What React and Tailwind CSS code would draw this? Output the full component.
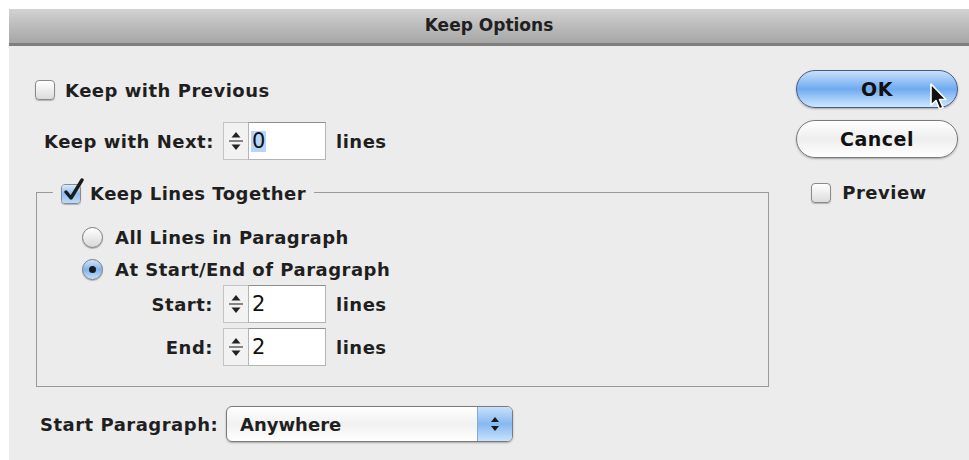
import React from 'react';

const font = { fontFamily: '"DejaVu Sans", "Liberation Sans", sans-serif' };

function Checkbox({ checked = false }) {
  return (
    <span className="relative inline-block h-[20px] w-[20px] shrink-0 rounded-[4px] border border-[#8a8a8a] bg-gradient-to-b from-[#ffffff] to-[#dcdcdc] shadow-[0_1px_1px_rgba(0,0,0,0.25)]">
      {checked && (
        <>
          <span className="absolute inset-0 rounded-[3px] bg-gradient-to-b from-[#d6e9fb] via-[#8fbef0] to-[#b9dcfb]" />
          <svg className="absolute -top-[7px] left-[1px]" width="22" height="25" viewBox="0 0 22 25">
            <path d="M3 14 L8 20 L19 2" fill="none" stroke="#1b1b1b" strokeWidth="3.4" strokeLinecap="round" strokeLinejoin="round" />
          </svg>
        </>
      )}
    </span>
  );
}

function Radio({ checked = false }) {
  return (
    <span
      className={`relative inline-flex h-[21px] w-[21px] shrink-0 items-center justify-center rounded-full border border-[#7d7d7d] shadow-[0_1px_1px_rgba(0,0,0,0.25)] ${
        checked ? 'bg-gradient-to-b from-[#cfe5fb] via-[#7fb4ec] to-[#c4e0fb]' : 'bg-gradient-to-b from-[#ffffff] to-[#d8d8d8]'
      }`}
    >
      {checked && <span className="h-[7px] w-[7px] rounded-full bg-[#1a1a1a]" />}
    </span>
  );
}

// number field with the little up/down arrows on its left
function Stepper({ value, selected = false }) {
  return (
    <div className="flex h-[38px]">
      <div className="flex w-[25px] flex-col items-center justify-center border border-r-0 border-[#c4c4c4] bg-[#f2f2f2]">
        <svg width="16" height="26" viewBox="0 0 16 26">
          <path d="M8 4 L12.5 9.5 L3.5 9.5 Z" fill="#222" />
          <line x1="1" y1="13" x2="15" y2="13" stroke="#555" strokeWidth="1.4" />
          <path d="M8 22 L12.5 16.5 L3.5 16.5 Z" fill="#222" />
        </svg>
      </div>
      <div className="flex w-[78px] items-center border border-[#b4b4b4] border-t-[#8e8e8e] bg-white pl-[2px] text-[21px] font-normal leading-none tracking-normal text-[#111]">
        <span className={selected ? 'bg-[#b5d5fb] px-[1px]' : 'px-[1px]'}>{value}</span>
      </div>
    </div>
  );
}

function Pill({ children, primary = false }) {
  return (
    <div
      className={`flex h-[38px] w-[162px] items-center justify-center rounded-full border text-[19px] text-[#111] shadow-[0_1px_2px_rgba(0,0,0,0.3)] ${
        primary
          ? 'border-[#4b5a86] bg-gradient-to-b from-[#c9e1fa] via-[#6faaf0] to-[#cfe8fd]'
          : 'border-[#7a7a7a] bg-gradient-to-b from-[#ffffff] via-[#eeeeee] to-[#ffffff]'
      }`}
    >
      {children}
    </div>
  );
}

export default function App() {
  return (
    <div
      className="h-[460px] w-[969px] overflow-hidden bg-white pl-[9px] pt-[9px] text-[18px] font-bold tracking-[0.5px] text-[#1f1f1f]"
      style={font}
    >
      <div className="flex h-full flex-col bg-[#ececec]">
        {/* title bar */}
        <div className="flex h-[34px] items-center justify-center bg-gradient-to-b from-[#d2d2d2] to-[#a6a6a6] text-[17px] tracking-normal text-[#202020]">
          Keep Options
        </div>
        <div className="h-[3px] bg-[#7f7f7f]" />

        <div className="relative flex flex-1">
          {/* left column */}
          <div className="flex flex-col pl-[26px] pt-[34px]">
            <label className="flex h-[20px] items-center gap-[10px]">
              <Checkbox />
              Keep with Previous
            </label>

            <div className="mt-[22px] flex items-center pl-[9px]">
              <span className="w-[179px]">Keep with Next:</span>
              <Stepper value="0" selected />
              <span className="ml-[10px]">lines</span>
            </div>

            {/* Keep Lines Together group */}
            <div className="relative ml-[1px] mt-[32px] h-[195px] w-[733px] border border-[#9a9a9a] pt-[31px]">
              <label className="absolute -top-[13px] left-[16px] flex items-center gap-[9px] bg-[#ececec] px-[8px]">
                <Checkbox checked />
                Keep Lines Together
              </label>

              <div className="flex flex-col gap-[5px] pl-[45px]">
                <label className="flex items-center gap-[12px]">
                  <Radio />
                  All Lines in Paragraph
                </label>
                <label className="flex items-center gap-[12px]">
                  <Radio checked />
                  At Start/End of Paragraph
                </label>
              </div>

              <div className="mt-[2px] flex flex-col gap-[5px]">
                <div className="flex items-center">
                  <span className="w-[176px] text-right">Start:</span>
                  <span className="w-[10px]" />
                  <Stepper value="2" />
                  <span className="ml-[10px]">lines</span>
                </div>
                <div className="flex items-center">
                  <span className="w-[176px] text-right">End:</span>
                  <span className="w-[10px]" />
                  <Stepper value="2" />
                  <span className="ml-[10px]">lines</span>
                </div>
              </div>
            </div>

            <div className="mt-[19px] flex items-center pl-[5px]">
              <span className="w-[186px]">Start Paragraph:</span>
              <div className="flex h-[36px] w-[287px] overflow-hidden rounded-[6px] border border-[#7b7b7b] bg-gradient-to-b from-[#ffffff] via-[#f1f1f1] to-[#ffffff] shadow-[0_1px_2px_rgba(0,0,0,0.3)]">
                <span className="flex flex-1 items-center pl-[13px] tracking-normal">Anywhere</span>
                <span className="flex w-[35px] items-center justify-center border-l border-[#8aa7cc] bg-gradient-to-b from-[#c8e0fa] via-[#86b9f0] to-[#c9e3fc]">
                  <svg width="10" height="18" viewBox="0 0 10 18">
                    <path d="M5 2 L9 7 L1 7 Z" fill="#1a1a1a" />
                    <path d="M5 16 L9 11 L1 11 Z" fill="#1a1a1a" />
                  </svg>
                </span>
              </div>
            </div>
          </div>

          {/* right column */}
          <div className="ml-auto mr-[11px] flex flex-col items-center pt-[24px]">
            <Pill primary>OK</Pill>
            <div className="mt-[12px]">
              <Pill>Cancel</Pill>
            </div>
            <label className="mt-[21px] flex items-center gap-[11px] pr-[16px]">
              <Checkbox />
              Preview
            </label>
          </div>

          {/* mouse pointer resting on OK */}
          <svg className="absolute left-[920px] top-[36px]" width="22" height="30" viewBox="0 0 22 30">
            <path d="M2 2 L2 23 L7 18.5 L10.5 27 L14 25.5 L10.5 17.5 L17 17.5 Z" fill="#111" stroke="#fff" strokeWidth="1.6" strokeLinejoin="round" />
          </svg>
        </div>
      </div>
    </div>
  );
}
